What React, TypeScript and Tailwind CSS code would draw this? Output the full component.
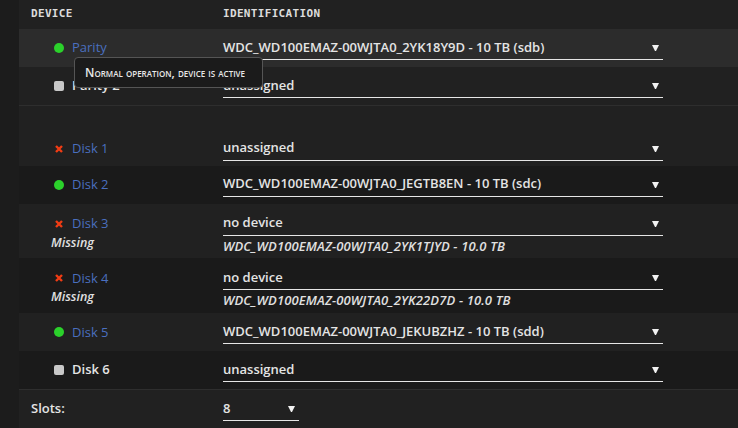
import React from 'react';

type Status = 'green' | 'grey' | 'red';

interface Slot {
  name: string;
  status: Status;
  value: string;
  dark?: boolean;
  hover?: boolean;
  missing?: string;
  plain?: boolean;
  short?: boolean;
}

const slots: Slot[] = [
  { name: 'Disk 1', status: 'red', value: 'unassigned', short: true },
  { name: 'Disk 2', status: 'green', value: 'WDC_WD100EMAZ-00WJTA0_JEGTB8EN - 10 TB (sdc)', dark: true },
  { name: 'Disk 3', status: 'red', value: 'no device', missing: 'WDC_WD100EMAZ-00WJTA0_2YK1TJYD - 10.0 TB' },
  { name: 'Disk 4', status: 'red', value: 'no device', missing: 'WDC_WD100EMAZ-00WJTA0_2YK22D7D - 10.0 TB', dark: true },
  { name: 'Disk 5', status: 'green', value: 'WDC_WD100EMAZ-00WJTA0_JEKUBZHZ - 10 TB (sdd)' },
  { name: 'Disk 6', status: 'grey', value: 'unassigned', dark: true, plain: true },
];

function Arrow() {
  return (
    <svg width="7" height="7" viewBox="0 0 7 7" className="shrink-0">
      <polygon points="0,1 7,1 4,7 3,7" fill="#f2f2f2" />
    </svg>
  );
}

function StatusIcon({ status }: { status: Status }) {
  if (status === 'green') {
    return <span className="inline-block w-[10px] h-[10px] rounded-full bg-[#2bd12b]" />;
  }
  if (status === 'grey') {
    return <span className="inline-block w-[10px] h-[10px] rounded-[2px] bg-[#c8c8c8]" />;
  }
  return (
    <svg width="10" height="10" viewBox="0 0 10 10">
      <path d="M2 2 L8 8 M8 2 L2 8" stroke="#f03c14" strokeWidth="2.4" strokeLinecap="butt" />
    </svg>
  );
}

function Select({ value, width = 'w-[440px]' }: { value: string; width?: string }) {
  return (
    <div className={`${width} h-[24px] border-b border-[#e6e6e6] flex items-center justify-between pr-[4px]`}>
      <span className="text-[13px] font-semibold text-[#e4e4e4]">{value}</span>
      <Arrow />
    </div>
  );
}

function Row({ slot }: { slot: Slot }) {
  const bg = slot.hover ? 'bg-[#2c2c2c]' : slot.dark ? 'bg-[#1a1a1a]' : 'bg-[#212121]';
  const size = slot.missing ? 'h-[55px] pt-[8px]' : slot.short ? 'h-[34px] items-center' : 'h-[38px] items-center';
  return (
    <div className={`flex ${bg} ${size}`}>
      <div className="w-[204px] shrink-0 flex flex-col">
        <div className="flex items-center h-[24px] pl-[35px] gap-[8px]">
          <span className="w-[10px] flex justify-center"><StatusIcon status={slot.status} /></span>
          <span className={`text-[13px] ${slot.plain ? 'text-[#e4e4e4] font-semibold' : 'text-[#4a6fbf]'}`}>{slot.name}</span>
        </div>
        {slot.missing && (
          <span className="pl-[32px] text-[12.5px] italic font-semibold text-[#e0e0e0] leading-[14px]">Missing</span>
        )}
      </div>
      <div className="flex flex-col">
        <Select value={slot.value} />
        {slot.missing && (
          <span className="pt-[1px] text-[13px] italic font-semibold text-[#e0e0e0] leading-[18px] tracking-[0.01em]">{slot.missing}</span>
        )}
      </div>
    </div>
  );
}

export default function App() {
  return (
    <div className="w-[738px] h-[428px] overflow-hidden flex bg-[#1c1c1c] font-['Open_Sans',sans-serif]">
      <div className="w-[19px] shrink-0" />
      <div className="flex-1 flex flex-col bg-[#212121] relative">
        {/* Header */}
        <div className="h-[29px] flex items-center text-[11px] font-bold tracking-[0.03em] text-[#dcdcdc] font-['DejaVu_Sans_Mono',monospace]">
          <span className="w-[204px] pl-[12px]">DEVICE</span>
          <span>IDENTIFICATION</span>
        </div>

        <Row slot={{ name: 'Parity', status: 'green', value: 'WDC_WD100EMAZ-00WJTA0_2YK18Y9D - 10 TB (sdb)', hover: true }} />
        <Row slot={{ name: 'Parity 2', status: 'grey', value: 'unassigned', plain: true }} />
        <div className="h-px bg-[#2e2e2e]" />
        <div className="h-[26px]" />

        {slots.map((s) => (
          <Row key={s.name} slot={s} />
        ))}
        <div className="h-px bg-[#2e2e2e]" />

        {/* Slots */}
        <div className="h-[38px] flex items-center">
          <span className="w-[204px] pl-[12px] text-[13px] font-semibold text-[#e4e4e4]">Slots:</span>
          <Select value="8" width="w-[76px]" />
        </div>

        {/* Tooltip */}
        <div className="absolute left-[55px] top-[57px] w-[189px] h-[31px] flex items-center px-[10px] rounded-[4px] border border-[#555] bg-[#1b1b1b] text-[12px] font-semibold text-[#e8e8e8] [font-variant:small-caps]">
          Normal operation, device is active
        </div>
      </div>
    </div>
  );
}
